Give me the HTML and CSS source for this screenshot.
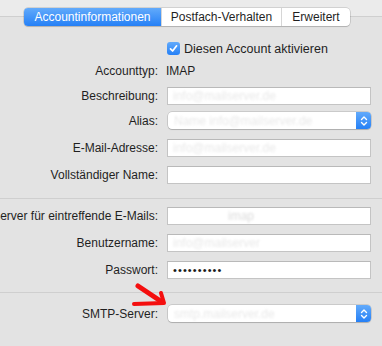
FILE: index.html
```html
<!DOCTYPE html>
<html lang="de">
<head>
    <meta charset="UTF-8">
    <meta name="viewport" content="width=device-width, initial-scale=1.0">
    <title>Accounts</title>
    <link rel="stylesheet" href="styles.css">
</head>
<body>
    <div class="titlebar"></div>

    <div class="tabs">
        <div class="tab tab-info active">Accountinformationen</div>
        <div class="tab tab-mailbox">Postfach-Verhalten</div>
        <div class="tab tab-extra">Erweitert</div>
    </div>

    <div class="form">
        <div class="row row-check">
            <div class="label"></div>
            <label class="check">
                <span class="box">
                    <svg width="9" height="9" viewBox="0 0 9 9"><path d="M1.5 4.8 L3.6 7 L7.6 1.8" fill="none" stroke="#fff" stroke-width="1.7" stroke-linecap="round" stroke-linejoin="round"/></svg>
                </span>
                Diesen Account aktivieren
            </label>
        </div>

        <div class="row row-text">
            <div class="label">Accounttyp:</div>
            <div class="value">IMAP</div>
        </div>

        <div class="row">
            <div class="label">Beschreibung:</div>
            <div class="field"><span class="blur">info@mailserver.de</span></div>
        </div>

        <div class="row row-select">
            <div class="label">Alias:</div>
            <div class="select">
                <span class="blur">Name info@mailserver.de</span>
                <span class="cap">
                    <svg width="8" height="12" viewBox="0 0 8 12"><path d="M1.5 4.5 L4 2 L6.5 4.5 M1.5 7.5 L4 10 L6.5 7.5" fill="none" stroke="#fff" stroke-width="1.4" stroke-linecap="round" stroke-linejoin="round"/></svg>
                </span>
            </div>
        </div>

        <div class="row row-after-select">
            <div class="label">E-Mail-Adresse:</div>
            <div class="field"><span class="blur">info@mailserver.de</span></div>
        </div>

        <div class="row">
            <div class="label">Vollständiger Name:</div>
            <div class="field"></div>
        </div>

        <hr class="sep sep-first">

        <div class="row row-after-sep">
            <div class="label">Server für eintreffende E-Mails:</div>
            <div class="field"><span class="blur small">imap</span></div>
        </div>

        <div class="row">
            <div class="label">Benutzername:</div>
            <div class="field"><span class="blur">info@mailserver</span></div>
        </div>

        <div class="row">
            <div class="label">Passwort:</div>
            <div class="field"><span class="dots">••••••••••</span></div>
        </div>

        <hr class="sep">

        <div class="row row-smtp">
            <div class="label">SMTP-Server:</div>
            <div class="select">
                <span class="blur">smtp.mailserver.de</span>
                <span class="cap">
                    <svg width="8" height="12" viewBox="0 0 8 12"><path d="M1.5 4.5 L4 2 L6.5 4.5 M1.5 7.5 L4 10 L6.5 7.5" fill="none" stroke="#fff" stroke-width="1.4" stroke-linecap="round" stroke-linejoin="round"/></svg>
                </span>
            </div>
        </div>
    </div>

    <!-- red marker drawn over the screenshot -->
    <svg class="marker" width="44" height="30" viewBox="0 0 44 30">
        <path d="M10 6 L34 22" fill="none" stroke="#f40f0f" stroke-width="5" stroke-linecap="round"/>
        <path d="M6 24 L36 23 L33 13" fill="none" stroke="#f40f0f" stroke-width="4" stroke-linecap="round" stroke-linejoin="round"/>
    </svg>
</body>
</html>
```

FILE: styles.css
```css
:root {
    --window-bg: #ebebeb;
    --panel-bg: #e3e3e3;
    --line: #cfcfcf;
    --text: #1f1f1f;
    --blue-top: #62aafb;
    --blue-bottom: #2580f6;
}

* {
    box-sizing: border-box;
    margin: 0;
    padding: 0;
}

body {
    font-family: 'Liberation Sans', Arial, sans-serif;
    font-size: 12px;
    color: var(--text);
    background: var(--panel-bg);
    width: 382px;
    height: 346px;
    overflow: hidden;
    position: relative;
}

.titlebar {
    height: 17px;
    background: var(--window-bg);
    border-bottom: 1px solid var(--line);
}

.tabs {
    display: flex;
    margin: -9px 0 0 24px;
    width: max-content;
    height: 18px;
    border-radius: 4px;
    background: #fff;
    box-shadow: 0 0 0 0.5px rgba(0, 0, 0, 0.22), 0 1px 1px rgba(0, 0, 0, 0.12);
}

.tab {
    line-height: 18px;
    text-align: center;
    border-left: 1px solid #d6d6d6;
    white-space: nowrap;
}

.tab-info {
    width: 137px;
}

.tab-mailbox {
    width: 120px;
}

.tab-extra {
    width: 69px;
}

.tab:first-child {
    border-left: none;
    border-radius: 4px 0 0 4px;
}

.tab.active {
    background: linear-gradient(var(--blue-top), var(--blue-bottom));
    color: #fff;
}

.form {
    display: flex;
    flex-direction: column;
}

.row {
    display: flex;
    align-items: center;
    gap: 9px;
    margin-top: 9px;
    height: 18px;
}

.row-check {
    margin-top: 16px;
    height: 13px;
}

.row-text {
    height: 14px;
}

.row-select {
    margin-top: 7px;
    height: 17px;
}

.row-after-select {
    margin-top: 10px;
}

.row-after-sep {
    margin-top: 8px;
}

.row-smtp {
    margin-top: 12px;
    height: 17px;
}

.label {
    flex: none;
    width: 158px;
    display: flex;
    justify-content: flex-end;
    white-space: nowrap;
}

.value {
    margin-left: -1px;
}

.field {
    width: 204px;
    height: 18px;
    background: #fff;
    border: 1px solid #c4c4c4;
    border-top-color: #b9b9b9;
    display: flex;
    align-items: center;
    padding-left: 5px;
    overflow: hidden;
}

.select {
    width: 203px;
    height: 17px;
    margin-left: 1px;
    background: #fff;
    border-radius: 4px;
    box-shadow: 0 0 0 0.5px rgba(0, 0, 0, 0.22), 0 1px 1px rgba(0, 0, 0, 0.14);
    display: flex;
    align-items: center;
    padding-left: 6px;
    overflow: hidden;
}

.cap {
    margin-left: auto;
    flex: none;
    width: 15px;
    height: 17px;
    background: linear-gradient(var(--blue-top), var(--blue-bottom));
    display: flex;
    align-items: center;
    justify-content: center;
}

.blur {
    color: #e9e9e9;
    filter: blur(1.2px);
    white-space: nowrap;
}

.blur.small {
    padding-left: 55px;
    color: #dcdcdc;
}

.dots {
    font-size: 11px;
    letter-spacing: 1.1px;
    color: #1a1a1a;
    margin-top: -1px;
}

.check {
    display: flex;
    align-items: center;
    gap: 4px;
    white-space: nowrap;
    font-size: 12.5px;
}

.box {
    width: 13px;
    height: 13px;
    border-radius: 3px;
    background: linear-gradient(var(--blue-top), var(--blue-bottom));
    display: flex;
    align-items: center;
    justify-content: center;
}

.sep {
    border: none;
    border-top: 1px solid var(--line);
    margin-top: 13px;
}

.sep-first {
    margin-top: 14px;
}

.marker {
    position: absolute;
    left: 128px;
    top: 280px;
}
```
